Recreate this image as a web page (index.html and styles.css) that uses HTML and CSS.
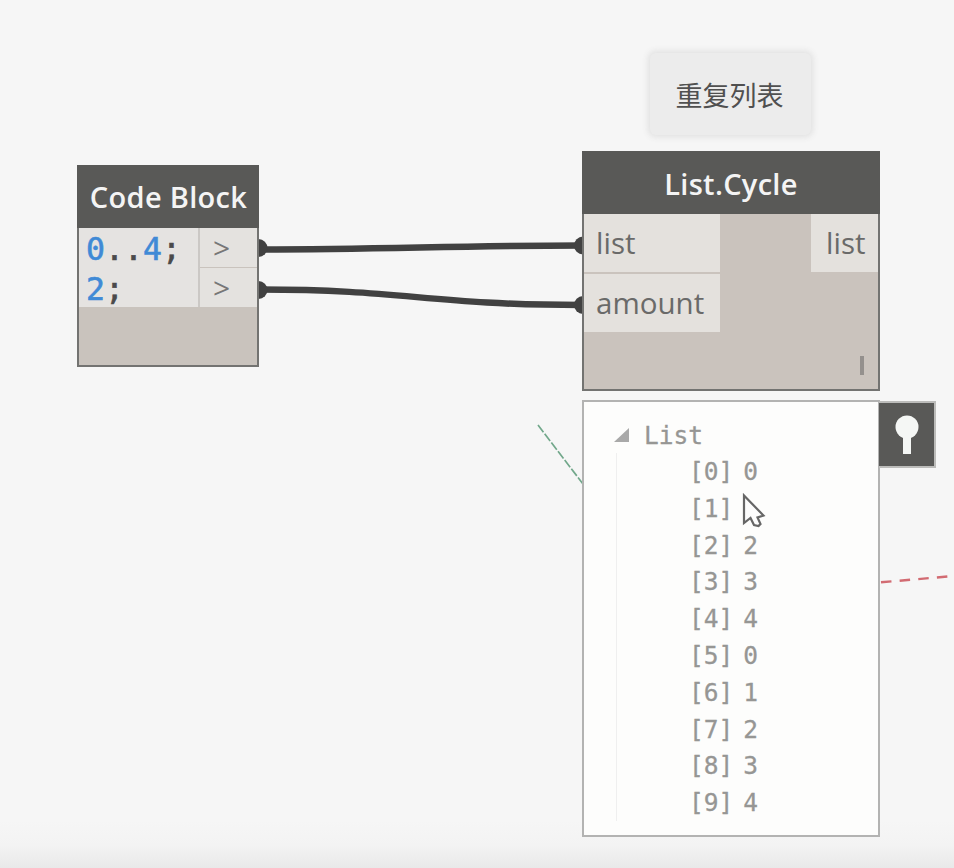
FILE: index.html
```html
<!DOCTYPE html>
<html lang="zh-CN">
<head>
<meta charset="utf-8">
<title>List.Cycle</title>
<link rel="stylesheet" href="styles.css">
</head>
<body>
<main class="canvas">
  <svg class="wires" width="954" height="868" viewBox="0 0 954 868" fill="none">
    <path class="wire" d="M260 249.500C385 249.500 455 245.500 582 245.500"/>
    <path class="wire" d="M260 289.500C405 289.500 430 305 582 305"/>
    <g class="port">
      <circle cx="258.500" cy="248" r="9"/>
      <circle cx="258.500" cy="290" r="9"/>
      <circle cx="583" cy="245.500" r="9"/>
      <circle cx="583" cy="305" r="9"/>
    </g>
    <path class="axis-y" d="M538 425L583 484"/>
    <path class="axis-x" d="M881 582.300L948 576.500"/>
  </svg>

  <div class="note">重复列表</div>

  <section class="node code-block">
    <h2 class="title">Code Block</h2>
    <div class="code-body">
      <div class="code">
        <div><span class="num">0</span>..<span class="num">4</span>;</div>
        <div><span class="num">2</span>;</div>
      </div>
      <div class="outs"><div class="out">&gt;</div><div class="out">&gt;</div></div>
    </div>
  </section>

  <section class="node cycle">
    <h2 class="title">List.Cycle</h2>
    <div class="ports">
      <div class="inputs"><div class="label">list</div><div class="label">amount</div></div>
      <div class="label output">list</div>
    </div>
    <span class="lacing"></span>
  </section>

  <section class="preview">
    <div class="root"><svg class="toggle" width="15" height="14" viewBox="0 0 15 14"><path d="M0 14L15 0V14Z"/></svg>List</div>
    <ol class="items">
      <li><span>[0]</span><span>0</span></li>
      <li><span>[1]</span><span></span></li>
      <li><span>[2]</span><span>2</span></li>
      <li><span>[3]</span><span>3</span></li>
      <li><span>[4]</span><span>4</span></li>
      <li><span>[5]</span><span>0</span></li>
      <li><span>[6]</span><span>1</span></li>
      <li><span>[7]</span><span>2</span></li>
      <li><span>[8]</span><span>3</span></li>
      <li><span>[9]</span><span>4</span></li>
    </ol>
  </section>
  <div class="pin">
    <svg width="24" height="40" viewBox="0 0 24 40"><circle cx="12" cy="12" r="11.500"/><path d="M8 20H16V39H8Z"/></svg>
  </div>
  <svg class="cursor" width="24" height="36" viewBox="0 0 24 36"><path d="M2 2.500V30L8.500 25L12 32L16.500 33L18.500 31L15.500 24.500L21.500 22.500Z"/></svg>
</main>
</body>
</html>
```

FILE: styles.css
```css
* { box-sizing: border-box; }

body { margin: 0; }

.canvas {
  position: relative;
  width: 954px;
  height: 868px;
  overflow: hidden;
  background: linear-gradient(#f6f6f6 0 820px, #f3f3f3 845px, #e9e9e9 868px);
  font-family: "Open Sans", "Noto Sans CJK SC", sans-serif;
}

.wires { position: absolute; inset: 0; }
.wire { stroke: #414141; stroke-width: 6.5; }
.port { fill: #414141; }
.axis-y { stroke: #72a88b; stroke-width: 1.7; stroke-dasharray: 9 2; }
.axis-x { stroke: #d26b72; stroke-width: 2.4; stroke-dasharray: 10.5 8.200; }

.note {
  position: absolute;
  left: 650px;
  top: 53px;
  width: 161px;
  height: 82px;
  display: grid;
  place-items: center;
  padding-right: 2px;
  border-radius: 6px;
  background: #ececec;
  box-shadow: 0 0 6px 2px #e0e0e0;
  color: #505050;
  font: 27px/1 "Noto Sans CJK SC", sans-serif;
}

.node {
  position: absolute;
  border: 2px solid #737371;
  background: #c9c3bd;
}
.title {
  display: flex;
  align-items: center;
  justify-content: center;
  height: 63px;
  margin: -2px -2px 0;
  background: #595957;
  color: #f4f4f4;
  font-size: 29px;
  font-weight: 600;
  letter-spacing: 0.3px;
  line-height: 1;
  white-space: nowrap;
}

.code-block { left: 77px; top: 165px; width: 182px; height: 202px; }
.code-block .title { padding-left: 1px; }
.code-body { display: flex; height: 79px; }
.code {
  width: 121px;
  padding: 1px 0 0 7px;
  border-right: 2px solid #cbc8c5;
  background: #e5e3e1;
  color: #4a4a4a;
  font: 31.500px/40px "DejaVu Sans Mono", monospace;
  -webkit-text-stroke: 0.6px currentColor;
}
.num { color: #408ad6; }
.outs { flex: 1; display: flex; flex-direction: column; gap: 1px; }
.out {
  flex: 1;
  display: flex;
  align-items: center;
  padding-left: 13px;
  background: #e4e2df;
  color: #777;
  font-size: 30px;
  line-height: 1;
}

.cycle { left: 582px; top: 151px; width: 298px; height: 240px; background: #cac3bd; }
.cycle .title { padding-top: 1px; }
.ports { display: flex; justify-content: space-between; align-items: flex-start; }
.inputs { display: flex; flex-direction: column; gap: 2px; width: 136px; }
.label {
  height: 58px;
  padding-left: 12px;
  background: #e4e1dd;
  color: #6a6a69;
  font-size: 29.500px;
  line-height: 58px;
}
.output { width: 67px; padding-left: 15px; }
.lacing {
  position: absolute;
  right: 14px;
  bottom: 14px;
  width: 4px;
  height: 19px;
  background: #94908d;
}

.preview {
  position: absolute;
  left: 582px;
  top: 400px;
  width: 298px;
  height: 437px;
  padding-top: 15px;
  border: 2px solid #b3b3b2;
  background: #fdfdfc;
  color: #969694;
  font: 24.500px/37px "DejaVu Sans Mono", monospace;
  -webkit-text-stroke: 0.3px currentColor;
}
.root { display: flex; align-items: center; gap: 15px; height: 36px; padding-left: 30px; }
.toggle { fill: #a9a9a9; }
.items {
  margin: 0 0 0 32px;
  padding: 0 0 0 72px;
  border-left: 1px solid #efefef;
  list-style: none;
}
.items li { display: flex; gap: 10px; height: 36.800px; }

.pin {
  position: absolute;
  left: 879px;
  top: 401px;
  width: 57px;
  height: 67px;
  display: grid;
  place-items: center;
  border: solid #bcbcba;
  border-width: 2px 2px 2px 0;
  background: #595957;
}
.pin svg { fill: #f5f7f5; }

.cursor {
  position: absolute;
  left: 742px;
  top: 493px;
  fill: #fcfcfc;
  stroke: #666;
  stroke-width: 2.200;
}
```
